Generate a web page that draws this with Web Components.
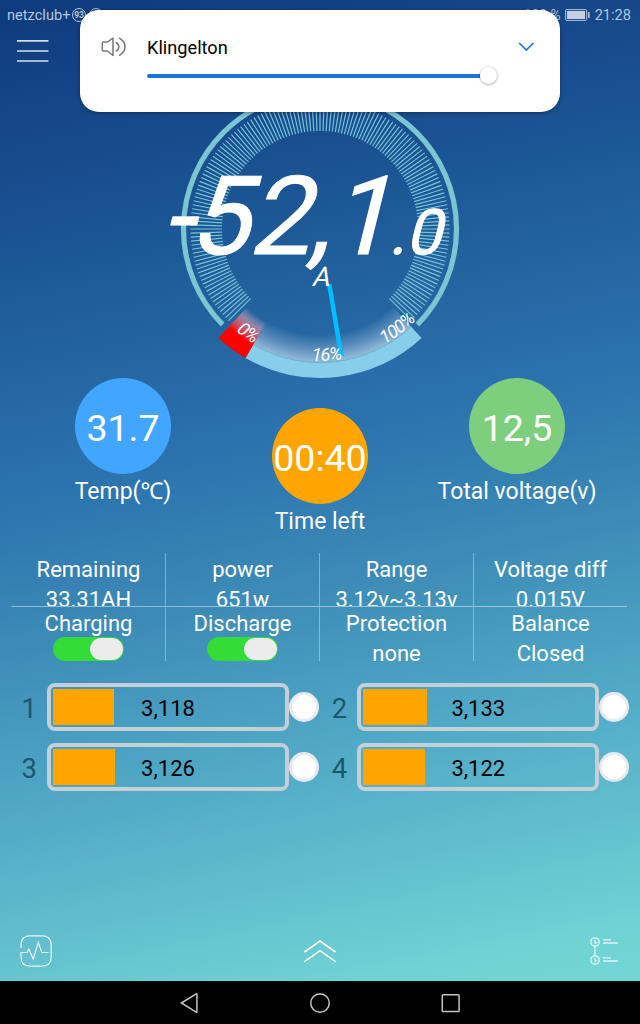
<!DOCTYPE html>
<html lang="en">
<head>
<meta charset="utf-8">
<title>Battery monitor</title>
<style>
    body {
        margin: 0;
        width: 640px;
        height: 1024px;
        overflow: hidden;
        font-family: Roboto, "Noto Sans", "Noto Sans CJK SC", sans-serif;
        color: #fff;
    }
</style>
</head>
<body>
<battery-app></battery-app>

<script>
class StatusBar extends HTMLElement {
    constructor() {
        super();
        this.shadow = this.attachShadow({ mode: "open" });
    }

    connectedCallback() {
        this.shadow.innerHTML = `
        <style>
            :host {
                display: flex;
                align-items: center;
                justify-content: space-between;
                height: 30px;
                padding: 0 9px 0 7px;
                box-sizing: border-box;
                font-size: 14.6px;
                color: #b3c6de;
            }
            div { display: flex; align-items: center; }
            .speed {
                width: 12.4px;
                height: 12.4px;
                margin-left: 1.5px;
                border: 1.2px solid #b3c6de;
                border-radius: 50%;
                font-size: 8.6px;
                font-weight: 700;
                line-height: 13px;
                text-align: center;
            }
            .ring {
                width: 12px;
                height: 12px;
                margin-left: 3px;
                border: 1.3px solid #b3c6de;
                border-radius: 50%;
            }
            .percent { font-size: 13.8px; }
            svg { margin: 0 5px 0 4px; }
        </style>
        <div>
            <span>netzclub+</span>
            <span class="speed">93</span>
            <span class="ring"></span>
        </div>
        <div>
            <span class="percent">100 %</span>
            <svg width="25" height="12" viewBox="0 0 25 12">
                <rect x="0.6" y="0.6" width="21" height="10.8" rx="1" fill="none" stroke="#b3c6de" stroke-width="1"/>
                <rect x="2" y="2" width="18" height="8" fill="#c3d0e4"/>
                <rect x="23" y="3" width="1.6" height="6" fill="#b3c6de"/>
            </svg>
            <span>21:28</span>
        </div>
        `;
    }
}

customElements.define('status-bar', StatusBar);

class VolumePanel extends HTMLElement {
    constructor() {
        super();
        this.shadow = this.attachShadow({ mode: "open" });
    }

    connectedCallback() {
        this.shadow.innerHTML = `
        <style>
            :host {
                display: block;
                box-sizing: border-box;
                width: 480px;
                height: 102px;
                padding: 22px 24px 0 20px;
                border-radius: 19px;
                background: #fff;
                color: #000;
                box-shadow: 0 1px 4px rgba(0, 0, 0, .35);
            }
            .title {
                display: flex;
                align-items: center;
                height: 30px;
                font-size: 18.2px;
            }
            .title svg:first-child { margin-right: 20px; }
            .title svg:last-child { margin-left: auto; margin-top: -1px; }
            .slider {
                display: flex;
                align-items: center;
                height: 18px;
                margin: 4.5px 0 0 47px;
            }
            .track {
                width: 333px;
                height: 4px;
                border-radius: 2px 0 0 2px;
                background: #1a75dc;
            }
            .thumb {
                width: 17px;
                height: 17px;
                border-radius: 50%;
                background: #fff;
                box-shadow: 0 0.5px 2.5px rgba(0, 0, 0, .45);
            }
        </style>
        <div class="title">
            <svg width="27" height="24" viewBox="0 0 27 24" fill="none" stroke="#777" stroke-width="1.5" stroke-linejoin="round" stroke-linecap="round">
                <path d="M7.5 7 L13 3 V20.5 L7.5 16 H3.5 Q2.3 16 2.3 14.8 V8.2 Q2.3 7 3.5 7 Z"/>
                <path d="M16.2 7.7 A4.6 4.6 0 0 1 16.2 16"/>
                <path d="M19.5 3.2 Q25 6.5 25 11.8 Q25 17.2 19.5 20.3"/>
            </svg>
            <slot></slot>
            <svg width="20" height="12" viewBox="0 0 20 12" fill="none" stroke="#1a75dc" stroke-width="1.7">
                <path d="M3.2 2 L10.3 9 L17.4 2"/>
            </svg>
        </div>
        <div class="slider"><div class="track"></div><div class="thumb"></div></div>
        `;
    }
}

customElements.define('volume-panel', VolumePanel);

class CurrentGauge extends HTMLElement {
    constructor() {
        super();
        this.shadow = this.attachShadow({ mode: "open" });
    }

    connectedCallback() {
        this.render();
    }

    // degrees are counted from straight down, positive to the right
    point(radius, deg) {
        const a = deg * Math.PI / 180;
        return `${(radius * Math.sin(a)).toFixed(2)} ${(radius * Math.cos(a)).toFixed(2)}`;
    }

    arc(radius, from, to) {
        const large = Math.abs(to - from) > 180 ? 1 : 0;
        const sweep = to > from ? 0 : 1;
        return `M${this.point(radius, from)} A${radius} ${radius} 0 ${large} ${sweep} ${this.point(radius, to)}`;
    }

    band(inner, outer, from, to) {
        return `${this.arc(outer, from, to)} L${this.point(inner, to)} ${this.arc(inner, to, from).replace(/^M\S+ \S+/, '')} Z`;
    }

    render() {
        let ticks = '';
        for(let i = 0; i <= 150; i++) {
            const deg = 45 + i * 1.8;
            ticks += `M${this.point(98, deg)} L${this.point(129.5, deg)} `;
        }

        this.shadow.innerHTML = `
        <style>
            :host { display: block; width: 320px; height: 298px; }
            svg { display: block; overflow: visible; }
            text { fill: #fff; }
            .big { stroke: #fff; stroke-width: 0.9; }
            .mark { font-size: 18px; font-style: italic; text-anchor: middle; letter-spacing: -0.6px; }
        </style>
        <svg width="320" height="298" viewBox="-160 -149 320 298">
            <defs>
                <radialGradient id="glow" gradientUnits="userSpaceOnUse" cx="0" cy="0" r="134">
                    <stop offset="0.79" stop-color="#d0dcf0" stop-opacity="0"/>
                    <stop offset="0.9" stop-color="#d0dcf0" stop-opacity="0.32"/>
                    <stop offset="1" stop-color="#bfe0f0" stop-opacity="0.72"/>
                </radialGradient>
                <radialGradient id="low" gradientUnits="userSpaceOnUse" cx="0" cy="0" r="134">
                    <stop offset="0.8" stop-color="#ffd0d8" stop-opacity="0"/>
                    <stop offset="0.87" stop-color="#f0a0b0" stop-opacity="0.55"/>
                    <stop offset="1" stop-color="#ff0000"/>
                </radialGradient>
                <path id="scale" pathLength="120" d="${this.arc(132, -60, 60)}"/>
            </defs>
            <path d="${this.arc(136.5, 45.5, 314.5)}" fill="none" stroke="#7cc5d3" stroke-width="5.2"/>
            <path d="${ticks}" stroke="#76c3d6" stroke-width="1.2"/>
            <path d="${this.band(104, 134, -30, 43)}" fill="url(#glow)"/>
            <path d="${this.band(104, 134, -43, -30)}" fill="url(#low)"/>
            <path d="${this.band(133.5, 149, -30, 43)}" fill="#87ceeb"/>
            <path d="${this.band(133.5, 149, -43, -30)}" fill="#f00"/>
            <path d="${this.arc(133.5, -30, 43)}" fill="none" stroke="#6aa6cb" stroke-width="0.7"/>
            <path d="M${this.point(56, 9.5)} L${this.point(129, 9.5)}" stroke="#00bfff" stroke-width="4.5"/>
            <text class="mark"><textPath href="#scale" startOffset="25.2">0%</textPath></text>
            <text class="mark"><textPath href="#scale" startOffset="63">16%</textPath></text>
            <text class="mark"><textPath href="#scale" startOffset="97.8">100%</textPath></text>
            <text class="big" transform="translate(-158.5 24.7) skewX(-14)" font-size="109.5" dx="0 -4.5 -1 -2 0">-52,1</text>
            <text class="big" transform="translate(69 24.7) skewX(-14)" font-size="63">.0</text>
            <text transform="translate(-8.5 57) skewX(-14)" font-size="27">A</text>
        </svg>
        `;
    }
}

customElements.define('current-gauge', CurrentGauge);

class RoundStat extends HTMLElement {
    constructor() {
        super();
        this.shadow = this.attachShadow({ mode: "open" });
    }

    connectedCallback() {
        this.shadow.innerHTML = `
        <style>
            :host { display: block; text-align: center; }
            .disc {
                display: flex;
                align-items: center;
                justify-content: center;
                width: 96px;
                height: 96px;
                margin: 0 auto;
                padding-top: 3px;
                box-sizing: border-box;
                border-radius: 50%;
                background: ${this.getAttribute('color')};
                font-size: 37.5px;
                white-space: nowrap;
            }
            .label {
                height: 33px;
                padding-top: 1px;
                font-size: 23px;
                line-height: 34px;
            }
        </style>
        <div class="disc">${this.getAttribute('value')}</div>
        <div class="label"><slot></slot></div>
        `;
    }
}

customElements.define('round-stat', RoundStat);

class InfoCell extends HTMLElement {
    constructor() {
        super();
        this.shadow = this.attachShadow({ mode: "open" });
    }

    connectedCallback() {
        this.shadow.innerHTML = `
        <style>
            :host {
                display: flex;
                flex-direction: column;
                align-items: center;
                overflow: hidden;
                box-sizing: border-box;
                padding-top: 2px;
                font-size: 22px;
                line-height: 30px;
                white-space: nowrap;
            }
            ::slotted(toggle-switch) { margin-top: -2px; }
        </style>
        <div>${this.getAttribute('label')}</div>
        <slot></slot>
        `;
    }
}

customElements.define('info-cell', InfoCell);

class ToggleSwitch extends HTMLElement {
    constructor() {
        super();
        this.shadow = this.attachShadow({ mode: "open" });
    }

    connectedCallback() {
        this.shadow.innerHTML = `
        <style>
            :host {
                display: flex;
                justify-content: flex-end;
                box-sizing: border-box;
                width: 71px;
                height: 24px;
                padding: 1px;
                border-radius: 12px;
                background: #33dc37;
            }
            .knob {
                width: 33.5px;
                border-radius: 11px;
                background: #ececec;
            }
        </style>
        <div class="knob"></div>
        `;
    }
}

customElements.define('toggle-switch', ToggleSwitch);

class CellBar extends HTMLElement {
    constructor() {
        super();
        this.shadow = this.attachShadow({ mode: "open" });
    }

    connectedCallback() {
        this.shadow.innerHTML = `
        <style>
            :host { display: flex; align-items: center; height: 48px; }
            .number, .case, .lamp { flex-shrink: 0; }
            .number {
                width: 25.5px;
                padding: 3px 0 0 21.5px;
                font-size: 27.5px;
                color: #1f566f;
            }
            .case {
                display: grid;
                align-items: center;
                justify-items: center;
                box-sizing: border-box;
                width: 242px;
                height: 48px;
                padding: 1.5px;
                border: 4px solid #c4cfd8;
                border-radius: 8px;
            }
            .case > * { grid-area: 1 / 1; }
            .fill {
                justify-self: start;
                width: ${this.getAttribute('fill')}px;
                height: 36.5px;
                background: #ffa500;
            }
            .value {
                padding-top: 2px;
                font-size: 22px;
                color: #000;
            }
            .lamp {
                width: 24px;
                height: 24px;
                border: 3px solid #e8eaf0;
                border-radius: 50%;
                background: #fff;
            }
        </style>
        <div class="number">${this.getAttribute('number')}</div>
        <div class="case">
            <div class="fill"></div>
            <div class="value"><slot></slot></div>
        </div>
        <div class="lamp"></div>
        `;
    }
}

customElements.define('cell-bar', CellBar);

class ToolBar extends HTMLElement {
    constructor() {
        super();
        this.shadow = this.attachShadow({ mode: "open" });
    }

    connectedCallback() {
        const clock = y => `
            <circle cx="7" cy="${y}" r="4.2"/>
            <path d="M7 ${y - 2.2} V${y + 0.8} H9.2 M15 ${y - 2.2} H23 M15 ${y + 1} H30"/>`;

        this.shadow.innerHTML = `
        <style>
            :host {
                display: flex;
                align-items: center;
                justify-content: space-between;
                height: 60px;
                padding: 0 20px;
            }
            svg { fill: none; stroke: #fff; }
        </style>
        <svg width="32" height="32" viewBox="0 0 32 32" stroke-width="1.2" opacity="0.85">
            <path d="M1 13 V10 Q1 0.8 10 0.8 H22 Q31.2 0.8 31.2 10 V22 Q31.2 31.2 22 31.2 H10 Q1 31.2 1 22 V17.5 H7 L8.8 14 L13.2 24 L18.3 7.5 L21.8 17.5 H28.5"/>
        </svg>
        <svg width="32" height="24" viewBox="0 0 32 24" stroke-width="1.6">
            <path d="M0.4 13 L16 2 L31.6 13 M0.4 22.7 L16 11.7 L31.6 22.7"/>
        </svg>
        <svg width="32" height="32" viewBox="0 0 32 32" stroke-width="1.3" opacity="0.8">
            <path d="M7 11.2 V20.8"/>
            ${clock(7)}
            ${clock(25)}
        </svg>
        `;
    }
}

customElements.define('tool-bar', ToolBar);

class NavBar extends HTMLElement {
    constructor() {
        super();
        this.shadow = this.attachShadow({ mode: "open" });
    }

    connectedCallback() {
        this.shadow.innerHTML = `
        <style>
            :host {
                display: flex;
                align-items: center;
                justify-content: center;
                gap: 107px;
                height: 43px;
                background: #000;
            }
            svg { fill: none; stroke: #c4c4c4; stroke-width: 1.5; }
        </style>
        <svg width="24" height="24"><path d="M4.4 12 L19.2 2.8 Q19.9 2.5 19.9 3.4 V20.6 Q19.9 21.5 19.2 21.2 Z"/></svg>
        <svg width="24" height="24"><circle cx="12" cy="12" r="9.3"/></svg>
        <svg width="24" height="24"><rect x="3.3" y="3.7" width="16.8" height="16.8" rx="0.8"/></svg>
        `;
    }
}

customElements.define('nav-bar', NavBar);

class BatteryApp extends HTMLElement {
    constructor() {
        super();
        this.shadow = this.attachShadow({ mode: "open" });
    }

    connectedCallback() {
        this.shadow.innerHTML = `
        <style>
            :host {
                display: flex;
                flex-direction: column;
                position: relative;
                height: 1024px;
                background: linear-gradient(168deg, #0f3a7c 0%, #1a5292 20%, #23649f 32%, #2a70ad 41%, #317bb1 48%, #3f8fb9 58%, #4ea6c5 69%, #60bbcd 80%, #6fd2d4 91%, #74d8d6 100%);
            }
            .menu {
                height: 50px;
                padding-left: 16.5px;
                box-sizing: border-box;
            }
            .menu svg { display: block; padding-top: 9px; }
            current-gauge { align-self: center; }
            .stats {
                display: grid;
                grid-template-columns: repeat(3, 197px);
                justify-content: center;
            }
            .stats .lower { margin-top: 30px; }
            .info {
                display: grid;
                grid-template-columns: repeat(4, 154px);
                grid-template-rows: 54px 54px;
                margin: 15px 0 0 11px;
            }
            .info > * { border-left: 1px solid rgba(255, 255, 255, .35); }
            .info > :nth-child(4n + 1) { border-left-color: transparent; }
            .info > :nth-child(-n + 4) { border-bottom: 1.5px solid rgba(255, 255, 255, .45); }
            .cells {
                display: grid;
                grid-template-columns: 310.3px 310.3px;
                row-gap: 12px;
                margin-top: 22px;
            }
            tool-bar { margin-top: auto; }
            volume-panel {
                position: absolute;
                left: 80px;
                top: 10px;
            }
        </style>
        <status-bar></status-bar>
        <div class="menu">
            <svg width="32" height="24" stroke="#d5dfeb" stroke-width="1.7"><path d="M0 1.8 H31.5 M0 12 H31.5 M0 22 H31.5"/></svg>
        </div>
        <current-gauge></current-gauge>
        <div class="stats">
            <round-stat value="31.7" color="#42a5ff">Temp(℃)</round-stat>
            <round-stat class="lower" value="00:40" color="#ffa500">Time left</round-stat>
            <round-stat value="12,5" color="#7dcf7d">Total voltage(v)</round-stat>
        </div>
        <div class="info">
            <info-cell label="Remaining">33.31AH</info-cell>
            <info-cell label="power">651w</info-cell>
            <info-cell label="Range">3.12v~3.13v</info-cell>
            <info-cell label="Voltage diff">0.015V</info-cell>
            <info-cell label="Charging"><toggle-switch></toggle-switch></info-cell>
            <info-cell label="Discharge"><toggle-switch></toggle-switch></info-cell>
            <info-cell label="Protection">none</info-cell>
            <info-cell label="Balance">Closed</info-cell>
        </div>
        <div class="cells">
            <cell-bar number="1" fill="61">3,118</cell-bar>
            <cell-bar number="2" fill="64">3,133</cell-bar>
            <cell-bar number="3" fill="62.5">3,126</cell-bar>
            <cell-bar number="4" fill="62">3,122</cell-bar>
        </div>
        <tool-bar></tool-bar>
        <nav-bar></nav-bar>
        <volume-panel>Klingelton</volume-panel>
        `;
    }
}

customElements.define('battery-app', BatteryApp);
</script>
</body>
</html>
